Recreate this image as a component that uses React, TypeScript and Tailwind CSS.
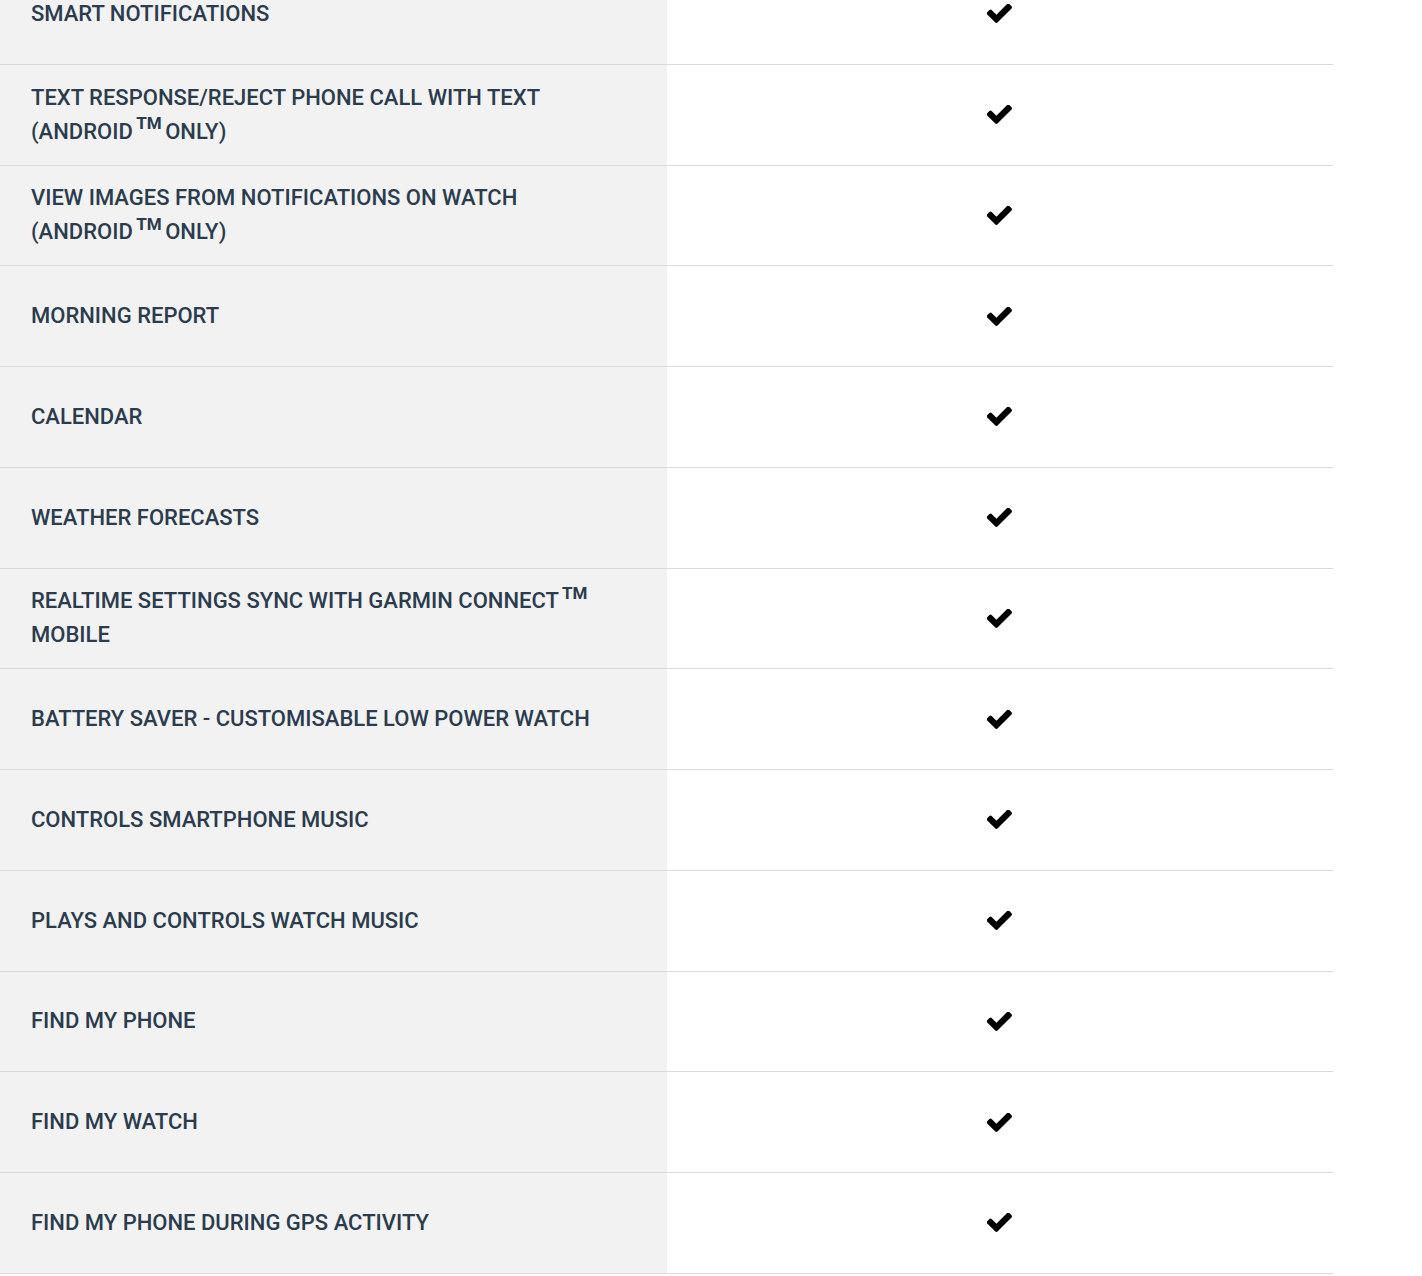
import React from 'react';

// Feature comparison rows (only one device column visible)
type Feature = {
  label: React.ReactNode;
};

const TM = () => (
  <sup className="relative -top-[1px] -ml-[2px] -mr-[2px] text-[17px] font-bold align-super leading-none">TM</sup>
);

const features: Feature[] = [
  { label: 'SMART NOTIFICATIONS' },
  {
    label: (
      <>
        TEXT RESPONSE/REJECT PHONE CALL WITH TEXT
        <br />
        (ANDROID <TM /> ONLY)
      </>
    ),
  },
  {
    label: (
      <>
        VIEW IMAGES FROM NOTIFICATIONS ON WATCH
        <br />
        (ANDROID <TM /> ONLY)
      </>
    ),
  },
  { label: 'MORNING REPORT' },
  { label: 'CALENDAR' },
  { label: 'WEATHER FORECASTS' },
  {
    label: (
      <>
        REALTIME SETTINGS SYNC WITH GARMIN CONNECT <TM />
        <br />
        MOBILE
      </>
    ),
  },
  { label: 'BATTERY SAVER - CUSTOMISABLE LOW POWER WATCH' },
  { label: 'CONTROLS SMARTPHONE MUSIC' },
  { label: 'PLAYS AND CONTROLS WATCH MUSIC' },
  { label: 'FIND MY PHONE' },
  { label: 'FIND MY WATCH' },
  { label: 'FIND MY PHONE DURING GPS ACTIVITY' },
];

function CheckIcon() {
  return (
    <svg width="25" height="19" viewBox="137 362 1534 1160" fill="#000" aria-hidden="true">
      <path d="M1671 566q0 40-28 68l-724 724-136 136q-28 28-68 28t-68-28l-136-136-362-362q-28-28-28-68t28-68l136-136q28-28 68-28t68 28l294 295 656-657q28-28 68-28t68 28l136 136q28 28 28 68z" />
    </svg>
  );
}

export default function App() {
  return (
    <div className="min-h-[1276px] bg-white overflow-hidden" style={{ fontFamily: 'Roboto, "Liberation Sans", sans-serif' }}>
      <div className="-mt-[36px] w-[1333px]">
        {features.map((f, i) => (
          <div key={i} className="flex h-[100.75px] border-b border-[#dadada]">
            <div className="w-[667px] shrink-0 bg-[#f2f2f2] flex items-center pl-[31px] pr-2">
              <span className="whitespace-nowrap text-[22px] leading-[34px] font-medium text-[#2a3c4e]">
                {f.label}
              </span>
            </div>
            <div className="flex-1 flex items-center justify-center pr-[2px]">
              <CheckIcon />
            </div>
          </div>
        ))}
      </div>
    </div>
  );
}
